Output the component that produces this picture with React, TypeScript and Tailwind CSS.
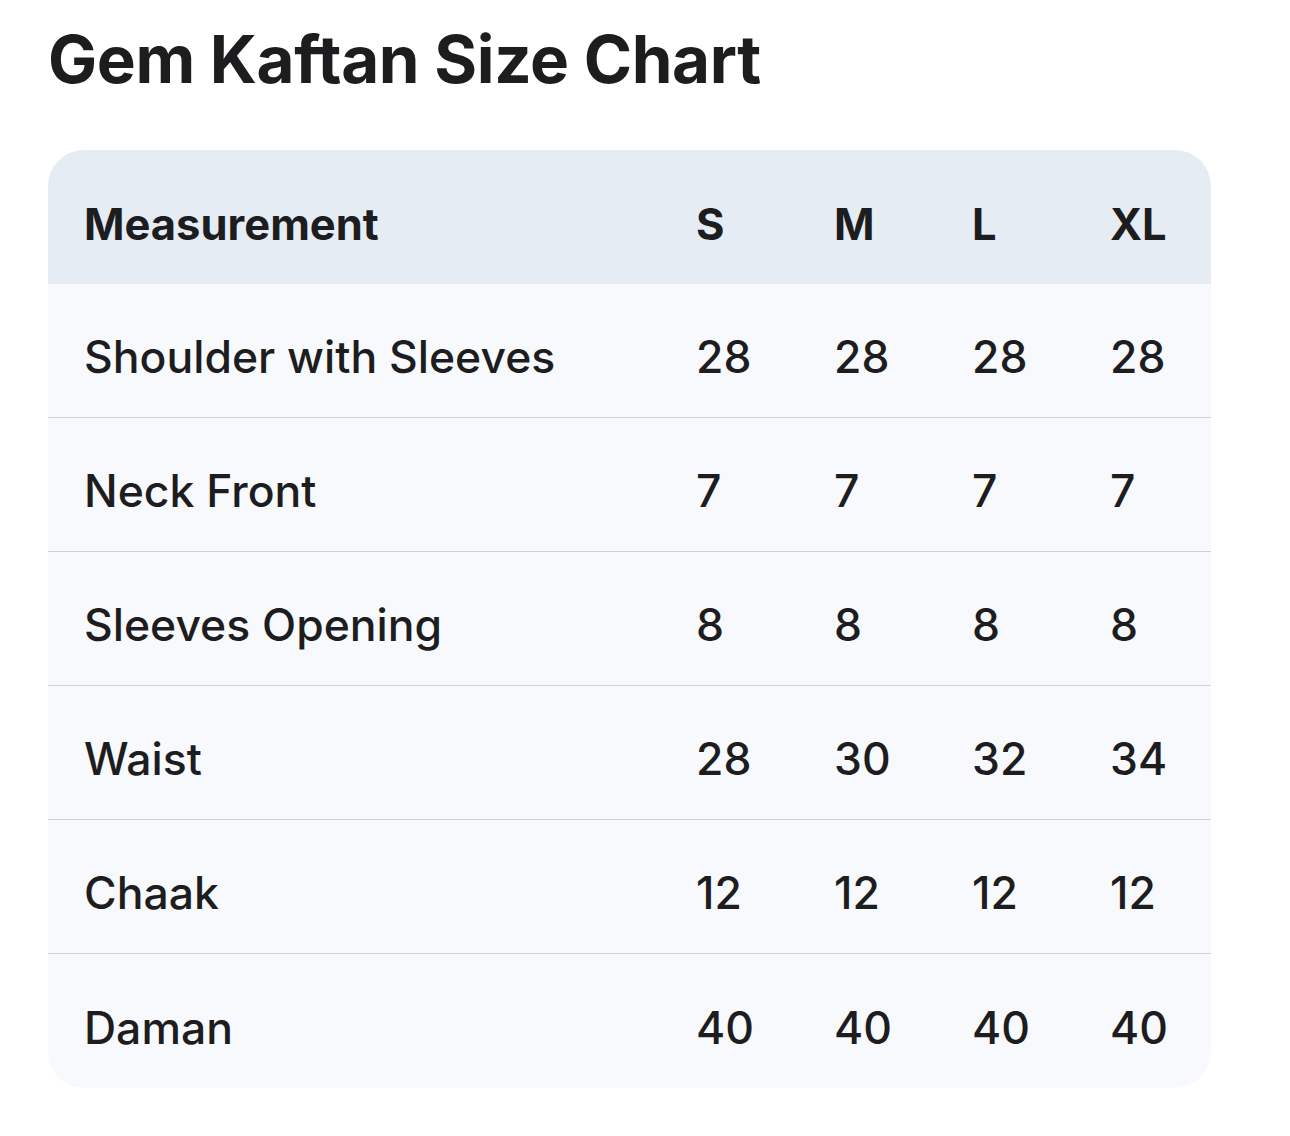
import React from "react";

const rows: [string, string[]][] = [
  ["Shoulder with Sleeves", ["28", "28", "28", "28"]],
  ["Neck Front", ["7", "7", "7", "7"]],
  ["Sleeves Opening", ["8", "8", "8", "8"]],
  ["Waist", ["28", "30", "32", "34"]],
  ["Chaak", ["12", "12", "12", "12"]],
  ["Daman", ["40", "40", "40", "40"]],
];

const grid = "grid grid-cols-[612px_138px_138px_138px_1fr] pl-[36px] items-center";

export default function App() {
  return (
    <div
      className="w-[1290px] h-[1136px] bg-white text-[#1d1d1f]"
      style={{ fontFamily: "Inter, 'Open Sans', sans-serif" }}
    >
      <div className="pl-[48px] pt-[21px]">
        <h1 className="text-[65.5px] leading-[78px] font-bold tracking-[-0.4px]">Gem Kaftan Size Chart</h1>
      </div>
      <div className="ml-[48px] mt-[51px] w-[1163px] rounded-[36px] overflow-hidden bg-[#f8f9fc]">
        <div className={`${grid} h-[134px] bg-[#e6ecf4] text-[43.5px] font-bold pt-[16px]`}>
          <div>Measurement</div>
          <div>S</div>
          <div>M</div>
          <div>L</div>
          <div>XL</div>
        </div>
        {rows.map(([label, vals], i) => (
          <div
            key={label}
            className={`${grid} h-[134px] text-[44.5px] font-medium pt-[14px] ${i < rows.length - 1 ? "border-b border-[#cfd2d6]" : ""}`}
          >
            <div>{label}</div>
            {vals.map((v, j) => (
              <div key={j}>{v}</div>
            ))}
          </div>
        ))}
      </div>
    </div>
  );
}
